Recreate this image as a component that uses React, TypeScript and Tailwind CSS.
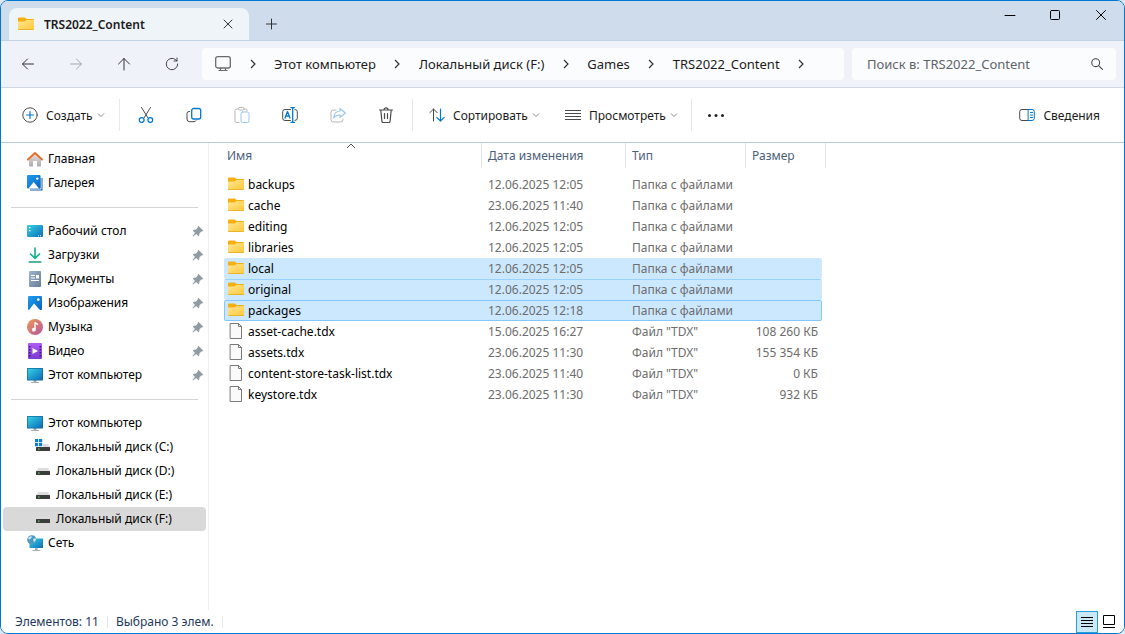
import React, { FC, ReactNode, useState } from 'react'

type IconProps = {
  className?: string
}

type SideItem = {
  title: string
  icon: ReactNode
  pinned?: boolean
  nested?: boolean
  active?: boolean
}

type FileRow = {
  name: string
  date: string
  folder: boolean
  size?: string
}

const Svg: FC<{ children: ReactNode; className?: string; color?: string }> = ({
  children,
  className = 'size-4',
  color = '#4a4a4a'
}) => (
  <svg
    viewBox="0 0 16 16"
    fill="none"
    stroke={color}
    strokeWidth="1"
    strokeLinecap="round"
    strokeLinejoin="round"
    className={`${className} shrink-0`}
    aria-hidden="true"
  >
    {children}
  </svg>
)

const Gradients = () => (
  <svg width="0" height="0" className="absolute" aria-hidden="true">
    <defs>
      <linearGradient id="folder" x1="0" y1="0" x2="1" y2="1">
        <stop offset="0" stopColor="#ffe594" />
        <stop offset="1" stopColor="#ffc937" />
      </linearGradient>
      <linearGradient id="screen" x1="0" y1="0" x2="1" y2="1">
        <stop offset="0" stopColor="#35d3e6" />
        <stop offset="1" stopColor="#0d6cb8" />
      </linearGradient>
      <linearGradient id="photo" x1="0" y1="0" x2="1" y2="1">
        <stop offset="0" stopColor="#1f9ff0" />
        <stop offset="1" stopColor="#0a62c0" />
      </linearGradient>
      <linearGradient id="house" x1="0" y1="0" x2="0" y2="1">
        <stop offset="0" stopColor="#e4e4e4" />
        <stop offset="1" stopColor="#ababab" />
      </linearGradient>
      <linearGradient id="doc" x1="0" y1="0" x2="1" y2="1">
        <stop offset="0" stopColor="#9fb6cc" />
        <stop offset="1" stopColor="#647d98" />
      </linearGradient>
      <linearGradient id="music" x1="0" y1="0" x2="1" y2="1">
        <stop offset="0" stopColor="#f29a50" />
        <stop offset="1" stopColor="#b454a4" />
      </linearGradient>
      <linearGradient id="video" x1="0" y1="0" x2="0" y2="1">
        <stop offset="0" stopColor="#b05cf5" />
        <stop offset="1" stopColor="#7a3bd0" />
      </linearGradient>
    </defs>
  </svg>
)

const FolderIcon: FC<IconProps> = ({ className }) => (
  <Svg className={className} color="none">
    <path d="M0 2.500a1 1 0 0 1 1-1h6L8.500 3H15a1 1 0 0 1 1 1v4H0z" fill="#f5b00f" />
    <path d="M0 5.500h6.500L8.500 4H16v9a1 1 0 0 1-1 1H1a1 1 0 0 1-1-1z" fill="url(#folder)" />
    <path d="M0 13h16a1 1 0 0 1-1 1H1a1 1 0 0 1-1-1z" fill="#eeb32c" />
  </Svg>
)

const FileIcon = () => (
  <Svg color="#7a7a7a">
    <path d="M2.5.5h8l3 3v12h-11z" fill="#fafafa" strokeLinejoin="miter" />
    <path d="M10.5.5v3h3" strokeLinejoin="miter" />
  </Svg>
)

const HomeIcon = () => (
  <Svg color="none">
    <path d="M2 7l6-5 6 5v7.5a1 1 0 0 1-1 1h-3V10H6v5.5H3a1 1 0 0 1-1-1z" fill="url(#house)" />
    <path d="M1 8.6L8 2l7 6.6" stroke="#e8702a" strokeWidth="2" />
  </Svg>
)

const GalleryIcon = () => (
  <Svg color="none">
    <path d="M3 3h12.5v12.5H3z" fill="#1261ad" />
    <path d="M14 2v12H2" stroke="#fff" />
    <rect width="13.5" height="13.5" rx="1" fill="url(#photo)" />
    <path d="M1.5 13.5L6.7 7l5.3 6.5z" fill="#fff" />
    <circle cx="10.3" cy="3.6" r="1.2" fill="#fff" />
  </Svg>
)

const DesktopIcon = () => (
  <Svg color="none">
    <rect y="2" width="16" height="12" rx="1" fill="url(#screen)" />
    <path d="M2 4h1.5v1.3H2zM2 7h1.5v1.3H2zM11 12.3h1v1h-1zM13 12.3h1v1h-1z" fill="#fff" />
  </Svg>
)

const DownloadsIcon = () => (
  <Svg color="#1fa67f">
    <path d="M8 1v10M3.5 7L8 11.3 12.5 7" stroke="#19b394" strokeWidth="1.7" />
    <path d="M2.3 15h11.4" stroke="#1e9b76" strokeWidth="1.7" />
  </Svg>
)

const DocumentsIcon = () => (
  <Svg color="none">
    <rect x="2" y="0" width="12" height="16" rx="1" fill="url(#doc)" />
    <path d="M4 4.500h4M4 7h4M4 9.500h8" stroke="#fff" strokeLinecap="butt" />
    <path d="M9 4h3v3.500H9z" fill="#fff" />
  </Svg>
)

const PicturesIcon = () => (
  <Svg color="none">
    <rect x="1" y="1" width="14" height="14" rx="1" fill="url(#photo)" />
    <path d="M2 15l5-6.5L13 15z" fill="#fff" />
    <circle cx="11.3" cy="4.6" r="1.3" fill="#fff" />
  </Svg>
)

const MusicIcon = () => (
  <Svg color="none">
    <circle cx="8" cy="8" r="8" fill="url(#music)" />
    <circle cx="6.8" cy="10.7" r="1.9" fill="#fff" />
    <path d="M8 10.5V3.7l2.6 1.6" stroke="#fff" strokeWidth="1.4" />
  </Svg>
)

const VideosIcon = () => (
  <Svg color="none">
    <rect x="1" y="0" width="14" height="16" rx="1" fill="url(#video)" />
    <path d="M5.5 5l5.500 3-5.500 3z" fill="#fff" />
    <path
      d="M2 3h1.5v1.5H2zM2 6h1.5v1.5H2zM2 9h1.5v1.5H2zM2 12h1.5v1.5H2zM12.5 3H14v1.5h-1.5zM12.5 6H14v1.5h-1.5zM12.5 9H14v1.5h-1.5zM12.5 12H14v1.5h-1.5z"
      fill="#3e1a78"
    />
  </Svg>
)

const ComputerIcon = () => (
  <Svg color="none">
    <path d="M6.5 13h3v2h-3zM4 15h8v1H4z" fill="#a5adb5" />
    <rect y="1" width="16" height="12.500" rx=".5" fill="#14649f" />
    <rect x=".7" y="1.7" width="14.6" height="11" fill="url(#screen)" />
  </Svg>
)

const NetworkIcon = () => (
  <Svg color="none">
    <path d="M8 13h2.5v2H8zM5.5 15h8v1h-8z" fill="#a5adb5" />
    <rect x="2.5" y="3.5" width="13.5" height="9.5" rx=".5" fill="url(#screen)" />
    <circle cx="4.8" cy="4.8" r="4.6" fill="#4b9ac4" />
    <path d="M1 3.5C2 1.500 4 1 5 1.500L4 3.500 2.500 4.500zM6 4l2.500-1 .5 2L7 7.500z" fill="#cde6f2" />
  </Svg>
)

const DriveIcon: FC<{ system?: boolean }> = ({ system }) => (
  <Svg color="none">
    {system ? (
      <>
        <path d="M0 0h3.2v3.2H0zM4 0h3.2v3.2H4zM0 4h3.2v3.2H0zM4 4h3.2v3.2H4z" fill="#0a7fd9" />
        <path d="M8 5h4.500L15 8H8z" fill="#dcdcde" />
      </>
    ) : (
      <path d="M3.500 5h9L15 8H1z" fill="#dcdcde" />
    )}
    <rect x="1" y="8" width="14" height="4" rx=".5" fill="#3c3c3c" />
    <path d="M3 9.500h1.500v1.200H3z" fill="#48d860" />
  </Svg>
)

const PinIcon = () => (
  <Svg className="size-3" color="none">
    <path
      d="M8.500 1l6.500 6.500-1.500 1.300-1.100-.3-2.700 2.700.1 2.600-1.300 1.200L5.700 12 1.200 15.300.7 14.800 4 10.300 1 7.500l1.300-1.300 2.600.1 2.700-2.700-.3-1.100z"
      fill="#8e9aa4"
    />
  </Svg>
)

const ChevronDown = () => (
  <svg viewBox="0 0 8 8" className="size-2 shrink-0" fill="none" stroke="#8a8a8a" aria-hidden="true">
    <path d="M1 2.500l3 3 3-3" />
  </svg>
)

const places: SideItem[][] = [
  [
    { title: 'Главная', icon: <HomeIcon /> },
    { title: 'Галерея', icon: <GalleryIcon /> }
  ],
  [
    { title: 'Рабочий стол', icon: <DesktopIcon />, pinned: true },
    { title: 'Загрузки', icon: <DownloadsIcon />, pinned: true },
    { title: 'Документы', icon: <DocumentsIcon />, pinned: true },
    { title: 'Изображения', icon: <PicturesIcon />, pinned: true },
    { title: 'Музыка', icon: <MusicIcon />, pinned: true },
    { title: 'Видео', icon: <VideosIcon />, pinned: true },
    { title: 'Этот компьютер', icon: <ComputerIcon />, pinned: true }
  ],
  [
    { title: 'Этот компьютер', icon: <ComputerIcon /> },
    { title: 'Локальный диск (C:)', icon: <DriveIcon system />, nested: true },
    { title: 'Локальный диск (D:)', icon: <DriveIcon />, nested: true },
    { title: 'Локальный диск (E:)', icon: <DriveIcon />, nested: true },
    { title: 'Локальный диск (F:)', icon: <DriveIcon />, nested: true, active: true },
    { title: 'Сеть', icon: <NetworkIcon /> }
  ]
]

const files: FileRow[] = [
  { name: 'backups', date: '12.06.2025 12:05', folder: true },
  { name: 'cache', date: '23.06.2025 11:40', folder: true },
  { name: 'editing', date: '12.06.2025 12:05', folder: true },
  { name: 'libraries', date: '12.06.2025 12:05', folder: true },
  { name: 'local', date: '12.06.2025 12:05', folder: true },
  { name: 'original', date: '12.06.2025 12:05', folder: true },
  { name: 'packages', date: '12.06.2025 12:18', folder: true },
  { name: 'asset-cache.tdx', date: '15.06.2025 16:27', folder: false, size: '108 260 КБ' },
  { name: 'assets.tdx', date: '23.06.2025 11:30', folder: false, size: '155 354 КБ' },
  { name: 'content-store-task-list.tdx', date: '23.06.2025 11:40', folder: false, size: '0 КБ' },
  { name: 'keystore.tdx', date: '23.06.2025 11:30', folder: false, size: '932 КБ' }
]

const crumbs = ['Этот компьютер', 'Локальный диск (F:)', 'Games', 'TRS2022_Content']

const TitleBar = () => (
  <header className="flex h-10 shrink-0 border-b border-[#c3d2e3] bg-[#cedceb]">
    <div className="mt-[7px] ml-2 flex w-60 items-center rounded-t-lg bg-[#eff4f9] pl-[9px]">
      <FolderIcon className="size-4" />
      <span className="ml-[10px] flex-1 pt-px font-semibold text-[#1b1b1b]">TRS2022_Content</span>
      <button type="button" aria-label="Закрыть вкладку" className="flex w-[42px] justify-center">
        <Svg color="#333">
          <path d="M4 4l8 8M12 4l-8 8" />
        </Svg>
      </button>
    </div>
    <button type="button" aria-label="Новая вкладка" className="mt-[7px] flex w-[46px] items-center justify-center">
      <Svg color="#333">
        <path d="M7.500 3v10M2.500 8h10" />
      </Svg>
    </button>
    <div className="ml-auto flex h-7">
      <button type="button" aria-label="Свернуть" className="flex w-[46px] items-center justify-center">
        <Svg color="#000">
          <path d="M4 8.500h10" />
        </Svg>
      </button>
      <button type="button" aria-label="Развернуть" className="flex w-[46px] items-center justify-center">
        <Svg color="#000">
          <rect x="3.500" y="3.500" width="9" height="9" rx="1" />
        </Svg>
      </button>
      <button type="button" aria-label="Закрыть" className="flex w-[46px] items-center justify-center">
        <Svg color="#000">
          <path d="M3.500 3.500l9 9M12.500 3.500l-9 9" />
        </Svg>
      </button>
    </div>
  </header>
)

const NavButton: FC<{ label: string; children: ReactNode }> = ({ label, children }) => (
  <button type="button" aria-label={label} className="flex w-12 shrink-0 items-center justify-center">
    {children}
  </button>
)

const Crumb = () => (
  <span className="flex w-[43px] shrink-0 justify-center">
    <svg viewBox="0 0 8 10" className="h-[10px] w-2" fill="none" stroke="#333" strokeWidth="1.200" aria-hidden="true">
      <path d="M2 1l4 4-4 4" />
    </svg>
  </span>
)

const NavBar: FC<{ search: string; setSearch: (value: string) => void }> = ({
  search,
  setSearch
}) => (
  <nav className="flex h-[47px] shrink-0 items-center border-b border-[#cfd8e2] bg-[#eff3f9] pr-2 pl-[3px] text-[13px] text-[#1b1b1b]">
    <NavButton label="Назад">
      <Svg color="#333">
        <path d="M2.500 8h11M7.500 3L2.500 8l5 5" />
      </Svg>
    </NavButton>
    <NavButton label="Вперёд">
      <Svg color="#a5a8ac">
        <path d="M2.500 8h11M8.500 3l5 5-5 5" />
      </Svg>
    </NavButton>
    <NavButton label="Вверх">
      <Svg color="#333">
        <path d="M8 2.500v11.500M2.500 8L8 2.500 13.500 8" />
      </Svg>
    </NavButton>
    <NavButton label="Обновить">
      <Svg color="#444">
        <path d="M13.700 8A5.700 5.700 0 1 1 11.800 3.800L13 5M13 2v3h-3" />
      </Svg>
    </NavButton>
    <div className="ml-[6px] flex h-8 min-w-0 flex-1 items-center rounded bg-[#fbfcfe] pl-[13px] whitespace-nowrap">
      <Svg color="#6a6a6a">
        <rect x=".7" y=".7" width="14.600" height="11.300" rx="2" strokeWidth="1.300" />
        <path d="M5.500 12.500v2M10.500 12.500v2M4 14.500h8" strokeWidth="1.200" />
      </Svg>
      {crumbs.map((item) => (
        <React.Fragment key={item}>
          <Crumb />
          <a href="#">{item}</a>
        </React.Fragment>
      ))}
      <Crumb />
    </div>
    <label className="ml-2 flex h-8 w-[264px] items-center rounded bg-[#fbfcfe] pr-3 pl-[15px]">
      <input
        type="text"
        value={search}
        onChange={(e: any) => setSearch(e.target.value)}
        aria-label="Поиск"
        placeholder="Поиск в: TRS2022_Content"
        className="min-w-0 flex-1 bg-transparent outline-none placeholder:text-[#606469]"
      />
      <Svg className="size-[14px]" color="#444">
        <circle cx="6.500" cy="6.500" r="4.500" strokeWidth="1.200" />
        <path d="M9.800 9.800l4.400 4.400" strokeWidth="1.200" />
      </Svg>
    </label>
  </nav>
)

const ToolButton: FC<{ label: string; disabled?: boolean; children: ReactNode }> = ({
  label,
  disabled,
  children
}) => (
  <button
    type="button"
    aria-label={label}
    disabled={disabled}
    className="flex h-8 w-12 items-center justify-center disabled:opacity-40"
  >
    {children}
  </button>
)

const Separator = () => <span className="h-8 w-px shrink-0 bg-[#e8e8e8]" />

const Toolbar = () => (
  <div className="flex h-[55px] shrink-0 items-center border-b border-[#b9cadb] bg-white pl-[21px] whitespace-nowrap text-[#1b1b1b]">
    <button type="button" className="flex h-8 w-[97px] items-center">
      <Svg>
        <circle cx="8" cy="8" r="7.200" />
        <path d="M8 4.500v7M4.500 8h7" stroke="#0078d4" strokeWidth="1.200" />
      </Svg>
      <span className="mr-1 ml-2 pt-px">Создать</span>
      <ChevronDown />
    </button>
    <Separator />
    <span className="w-[2px]" />
    <ToolButton label="Вырезать">
      <Svg>
        <path d="M3.500.5l6.700 10.700M12.500.5L5.800 11.200" />
        <g stroke="#0078d4" strokeWidth="1.300">
          <circle cx="3.700" cy="13" r="2.400" />
          <circle cx="12.300" cy="13" r="2.400" />
        </g>
      </Svg>
    </ToolButton>
    <ToolButton label="Копировать">
      <Svg>
        <path d="M3.500 4.500H3a2 2 0 0 0-2 2v5.500a2.700 2.700 0 0 0 2.700 2.700H8a2 2 0 0 0 2-1" />
        <rect x="5.700" y="1.500" width="9" height="10.500" rx="2" stroke="#0078d4" strokeWidth="1.300" />
      </Svg>
    </ToolButton>
    <ToolButton label="Вставить" disabled>
      <Svg>
        <path d="M5 15.500H2.500a1.500 1.500 0 0 1-1.500-1.500V3.500A1.500 1.500 0 0 1 2.500 2H4M10 2h1.500A1.500 1.500 0 0 1 13 3.500V4" />
        <rect x="4.500" y=".5" width="5.500" height="2.500" rx="1.200" />
        <rect x="7" y="5" width="8" height="10.500" rx="1.500" stroke="#0078d4" />
      </Svg>
    </ToolButton>
    <ToolButton label="Переименовать">
      <Svg>
        <path d="M8.500 2.500H3a2.300 2.300 0 0 0-2.300 2.300v6.400A2.300 2.300 0 0 0 3 13.500h5.500M13 2.500a2.300 2.300 0 0 1 2.300 2.300v6.400A2.300 2.300 0 0 1 13 13.500" />
        <path d="M10.700.5v15M9 .5h3.500M9 15.500h3.500M3 11l2.500-6.500L8 11M3.800 9h3.400" stroke="#0078d4" strokeWidth="1.300" />
      </Svg>
    </ToolButton>
    <ToolButton label="Поделиться" disabled>
      <Svg>
        <path d="M6 3H3.500A2.500 2.500 0 0 0 1 5.500v7A2.500 2.500 0 0 0 3.500 15h7a2.500 2.500 0 0 0 2.500-2.500V12" />
        <path d="M10 1.500L15.300 6 10 10.500V8C7 8 5 8.800 3.800 11 4 7 6 4.300 10 4z" stroke="#0078d4" strokeWidth="1.200" />
      </Svg>
    </ToolButton>
    <ToolButton label="Удалить">
      <Svg>
        <path d="M1.500 3h13M6 2.800a2 2 0 0 1 4 0M2.800 3l1.100 11.200a1.400 1.400 0 0 0 1.400 1.300h5.400a1.400 1.400 0 0 0 1.400-1.300L13.200 3M6.500 6.500v5M9.500 6.500v5" strokeWidth="1.200" />
      </Svg>
    </ToolButton>
    <span className="w-[2px]" />
    <Separator />
    <button type="button" className="ml-4 flex h-8 w-[136px] items-center">
      <Svg>
        <path d="M4.500 14V2M.8 5.700L4.500 2l3.700 3.700" />
        <path d="M11.500 2v12M7.800 10.300l3.700 3.700 3.700-3.700" stroke="#0078d4" strokeWidth="1.200" />
      </Svg>
      <span className="mr-1 ml-2 pt-px">Сортировать</span>
      <ChevronDown />
    </button>
    <button type="button" className="flex h-8 w-[126px] items-center">
      <Svg>
        <path d="M0 3.500h16M0 6.500h16M0 9.500h16M0 12.500h16" strokeLinecap="butt" />
      </Svg>
      <span className="mr-1 ml-2 pt-px">Просмотреть</span>
      <ChevronDown />
    </button>
    <Separator />
    <button type="button" aria-label="Дополнительно" className="flex h-8 w-12 items-center justify-center">
      <Svg color="none">
        <g fill="#222">
          <circle cx="1.500" cy="8.500" r="1.500" />
          <circle cx="8" cy="8.500" r="1.500" />
          <circle cx="14.500" cy="8.500" r="1.500" />
        </g>
      </Svg>
    </button>
    <button type="button" className="mr-6 ml-auto flex h-8 items-center">
      <Svg>
        <path d="M9.500 2.500H3a2.300 2.300 0 0 0-2.300 2.300v6.400A2.300 2.300 0 0 0 3 13.500h6.500" />
        <path d="M9.500 2.500H13a2.300 2.300 0 0 1 2.300 2.300v6.400a2.300 2.300 0 0 1-2.300 2.300H9.500zM11.500 5.500h2M11.500 8h2M11.500 10.500h2" stroke="#0078d4" />
      </Svg>
      <span className="ml-2 pt-px">Сведения</span>
    </button>
  </div>
)

const Sidebar = () => (
  <aside className="w-52 shrink-0 border-r border-[#f0f0f0] pt-1 text-black">
    {places.map((group, index) => (
      <div key={index}>
        {index > 0 && (
          <div className="flex h-6 items-center px-[10px]">
            <hr className="w-full border-[#d4d4d4]" />
          </div>
        )}
        <ul>
          {group.map((item) => (
            <li key={item.title} className="px-[2px]">
              <a
                href="#"
                className={`flex h-6 items-center gap-[5px] rounded-sm pr-[2px] whitespace-nowrap ${
                  item.nested ? 'pl-8' : 'pl-6'
                } ${item.active ? 'bg-[#d9d9d9]' : ''}`}
              >
                {item.icon}
                <span className="flex-1">{item.title}</span>
                {item.pinned && <PinIcon />}
              </a>
            </li>
          ))}
        </ul>
      </div>
    ))}
  </aside>
)

const FileTable: FC<{ selected: string[]; focused: string }> = ({ selected, focused }) => {
  const cell = (file: FileRow) => {
    if (file.name === focused) return 'border-y-[#84c7fb] bg-[#cce8ff]'
    if (!selected.includes(file.name)) return ''
    return file.name === selected[0] ? 'bg-[#cce8ff]' : 'border-t-[#99d1ff] bg-[#cce8ff]'
  }

  return (
    <main className="min-w-0 flex-1 overflow-auto pl-[15px]">
      <table className="w-[602px] table-fixed border-separate border-spacing-0 text-left text-[#6d6d6d]">
        <colgroup>
          <col className="w-[258px]" />
          <col className="w-36" />
          <col className="w-[120px]" />
          <col className="w-[76px]" />
          <col className="w-1" />
        </colgroup>
        <thead className="text-[#4c607a]">
          <tr className="h-[25px]">
            <th className="relative border-r border-[#e5e5e5] pl-[3px] font-normal" aria-sort="ascending">
              <svg viewBox="0 0 10 6" className="absolute top-0 left-[122px] h-[6px] w-[10px]" fill="none" stroke="#555" aria-hidden="true">
                <path d="M1 5l4-4 4 4" />
              </svg>
              Имя
            </th>
            <th className="border-r border-[#e5e5e5] pl-[6px] font-normal">Дата изменения</th>
            <th className="border-r border-[#e5e5e5] pl-[6px] font-normal">Тип</th>
            <th colSpan={2} className="border-r border-[#e5e5e5] pl-[6px] font-normal">
              Размер
            </th>
          </tr>
        </thead>
        <tbody className="leading-[18px] before:block before:h-[6px]">
          {files.map((file) => (
            <tr key={file.name} className="h-[21px] whitespace-nowrap">
              <td
                className={`rounded-l-xs border-y border-l border-transparent pt-px pl-[3px] ${cell(file)} ${
                  file.name === focused ? 'border-l-[#84c7fb]' : ''
                }`}
              >
                <div className="flex h-[18px] items-start gap-1 text-black">
                  {file.folder ? <FolderIcon /> : <FileIcon />}
                  {file.name}
                </div>
              </td>
              <td className={`border-y border-transparent pt-px pl-[6px] ${cell(file)}`}>{file.date}</td>
              <td className={`border-y border-transparent pt-px pl-[6px] ${cell(file)}`}>
                {file.folder ? 'Папка с файлами' : 'Файл "TDX"'}
              </td>
              <td
                className={`rounded-r-xs border-y border-r border-transparent pt-px pr-[3px] text-right ${cell(file)} ${
                  file.name === focused ? 'border-r-[#84c7fb]' : ''
                }`}
              >
                {file.size}
              </td>
            </tr>
          ))}
        </tbody>
      </table>
    </main>
  )
}

const StatusBar: FC<{ total: number; count: number }> = ({ total, count }) => (
  <footer className="flex h-[23px] shrink-0 items-center bg-white pl-[14px] text-[#1e395b]">
    <span>Элементов: {total}</span>
    <span className="mx-2 h-3 w-px bg-[#e8e8e8]" />
    <span>Выбрано {count} элем.</span>
    <span className="mx-2 h-3 w-px bg-[#e8e8e8]" />
    <div className="mr-1 ml-auto flex">
      <button
        type="button"
        aria-label="Таблица"
        className="flex size-[22px] items-center justify-center border border-[#26a0da] bg-[#cbe8f6]"
      >
        <Svg color="#000">
          <path d="M2 3.500h12M2 6.500h12M2 9.500h12M2 12.500h12" strokeLinecap="butt" />
        </Svg>
      </button>
      <button type="button" aria-label="Крупные значки" className="flex size-[22px] items-center justify-center">
        <Svg color="#000">
          <path d="M2.500 1.500h11v9h-11zM2 13.500h12" strokeLinejoin="miter" strokeLinecap="butt" />
        </Svg>
      </button>
    </div>
  </footer>
)

const App = () => {
  const [search, setSearch] = useState('')
  const [selected] = useState(['local', 'original', 'packages'])

  return (
    <div className="h-screen bg-[#dfe6ee]">
      <div className="flex h-full flex-col overflow-hidden rounded-lg border border-[#0078d4] bg-white font-['Noto_Sans',sans-serif] text-[12px] leading-4">
        <Gradients />
        <TitleBar />
        <NavBar search={search} setSearch={setSearch} />
        <Toolbar />
        <div className="flex min-h-0 flex-1">
          <Sidebar />
          <FileTable selected={selected} focused="packages" />
        </div>
        <StatusBar total={files.length} count={selected.length} />
      </div>
    </div>
  )
}

export default App
